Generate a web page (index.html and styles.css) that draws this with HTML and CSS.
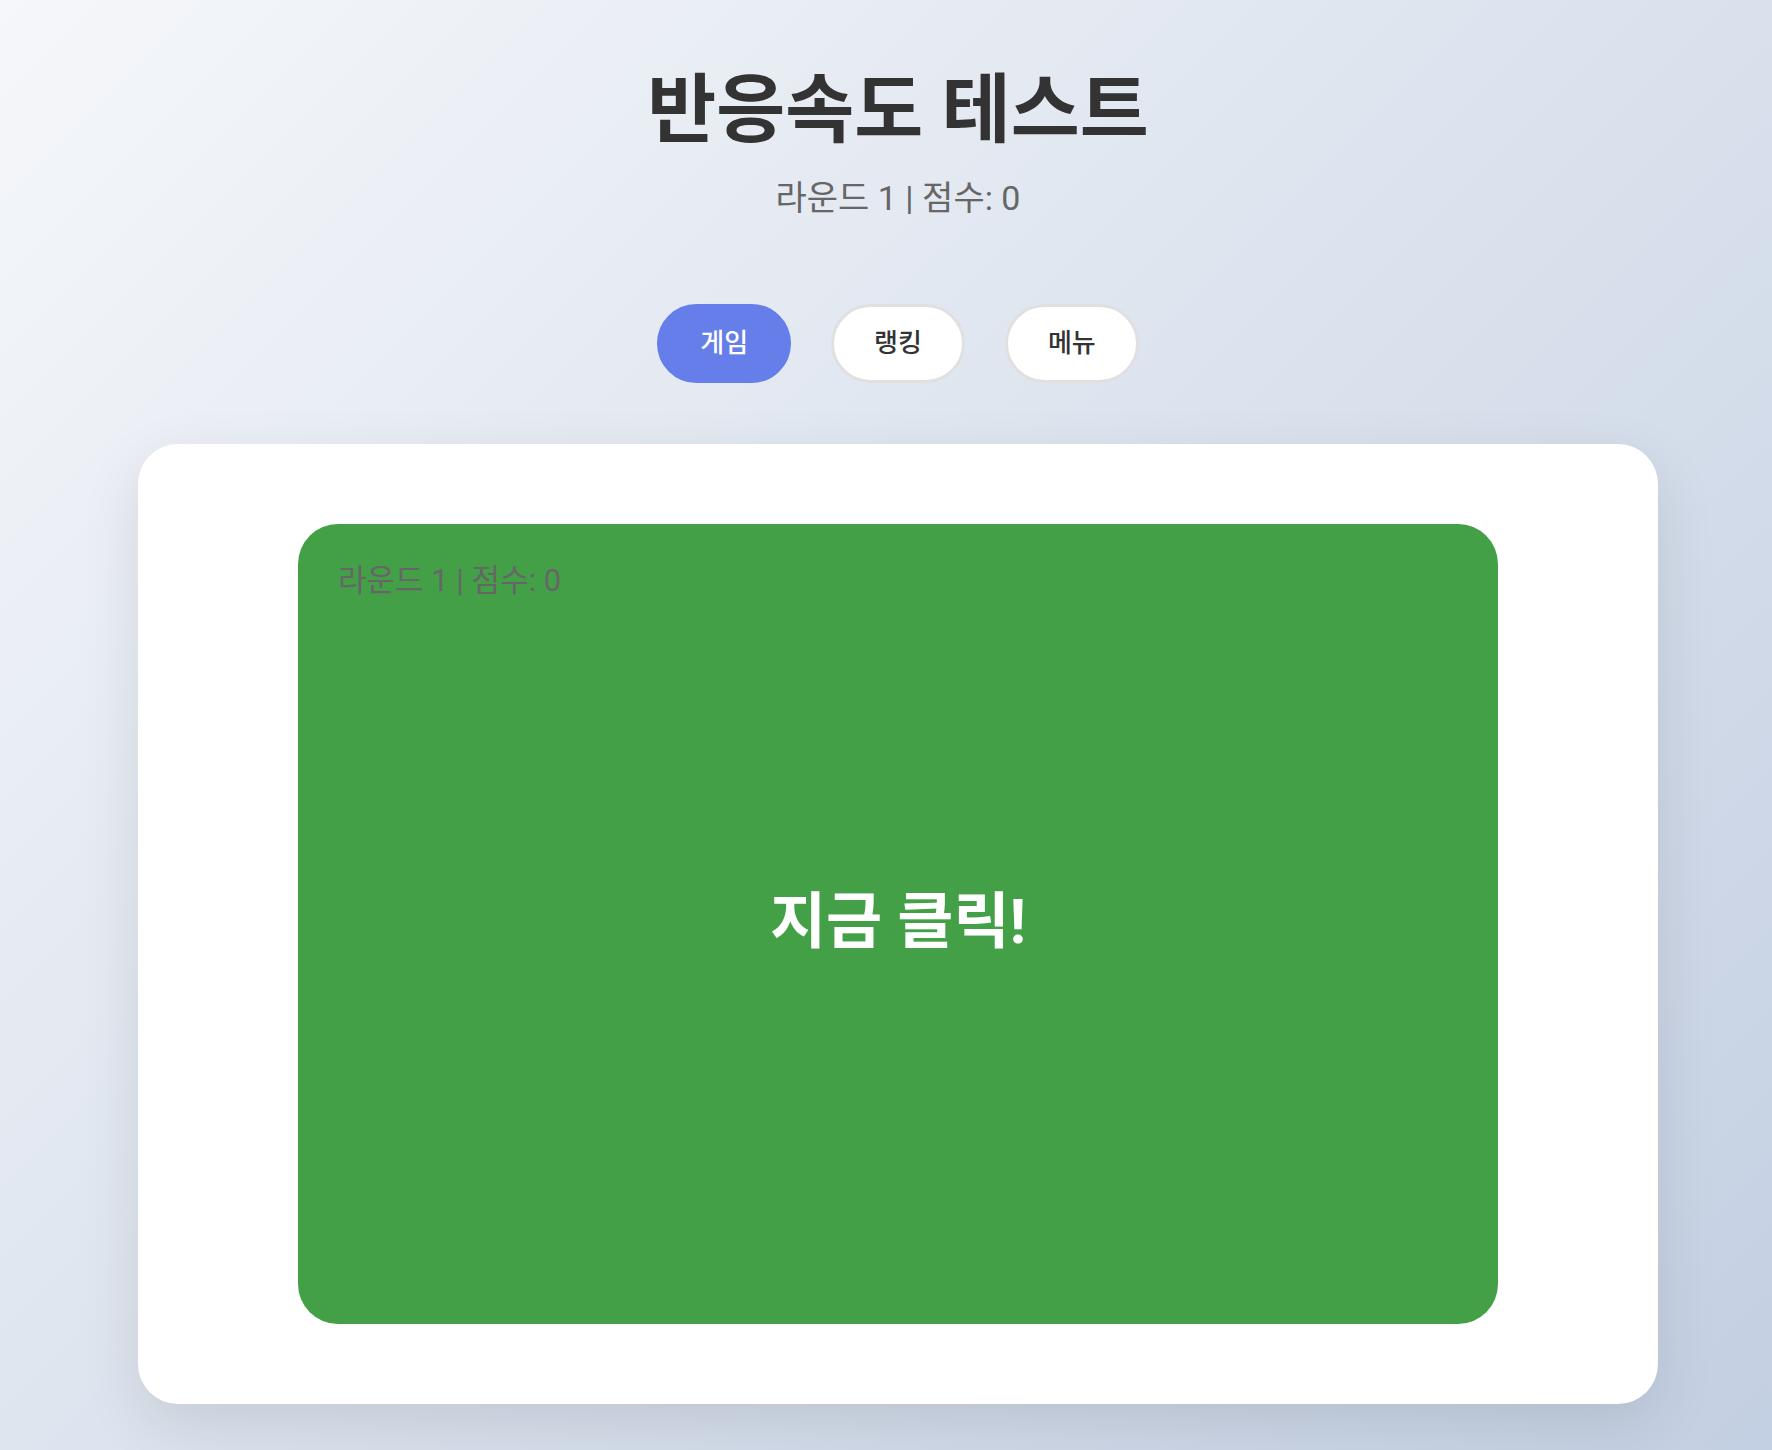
FILE: index.html
```html
<!DOCTYPE html>
<html lang="ko">
<head>
    <meta charset="UTF-8">
    <title>반응속도 테스트</title>
    <link rel="stylesheet" href="styles.css">
</head>
<body>
    <div id="main">
        <header class="top">
            <h1 class="title">반응속도 테스트</h1>
            <p class="status">라운드 1 | 점수: 0</p>
        </header>
        <nav class="tabs">
            <button class="tab tab-active">게임</button>
            <button class="tab">랭킹</button>
            <button class="tab">메뉴</button>
        </nav>
        <section class="card">
            <div class="game-area">
                <span class="game-status">라운드 1 | 점수: 0</span>
                <span class="game-msg">지금 클릭!</span>
            </div>
        </section>
    </div>
</body>
</html>
```

FILE: styles.css
```css
body, html {
    margin: 0;
    padding: 0;
    min-height: 100%;
}

body {
    font-family: Roboto, "Noto Sans CJK KR", sans-serif;
    background: linear-gradient(135deg, #f5f7fa 0%, #c3cfe2 100%);
    min-height: 1450px;
    padding-left: 24px;
    box-sizing: border-box;
    overflow: hidden;
}

#main {
    width: 1520px;
    margin: 0 auto;
    padding-top: 65px;
}

.top {
    text-align: center;
}

.title {
    margin: 0;
    font-size: 75px;
    line-height: 90px;
    font-weight: 700;
    color: #333;
}

.status {
    margin: 19px 0 0 0;
    font-size: 34px;
    line-height: 48px;
    color: #666;
}

.tabs {
    display: flex;
    justify-content: center;
    gap: 40px;
    margin-top: 82px;
}

.tab {
    font-family: inherit;
    font-size: 26px;
    line-height: 37px;
    font-weight: 500;
    padding: 18px 40px;
    border: 3px solid #e0e0e0;
    border-radius: 40px;
    background-color: white;
    color: #333;
    cursor: pointer;
}

.tab-active {
    background-color: #667eea;
    border-color: #667eea;
    color: white;
}

.card {
    margin-top: 61px;
    background-color: white;
    border-radius: 40px;
    padding: 80px 160px;
    box-shadow: 0 20px 60px rgba(0, 0, 0, 0.1);
}

.game-area {
    position: relative;
    height: 800px;
    box-sizing: border-box;
    padding-bottom: 16px;
    border-radius: 40px;
    background-color: #43a047;
    display: flex;
    align-items: center;
    justify-content: center;
}

.game-status {
    position: absolute;
    top: 31px;
    left: 40px;
    font-size: 31px;
    color: #666;
}

.game-msg {
    font-size: 61px;
    font-weight: 700;
    color: white;
}
```
